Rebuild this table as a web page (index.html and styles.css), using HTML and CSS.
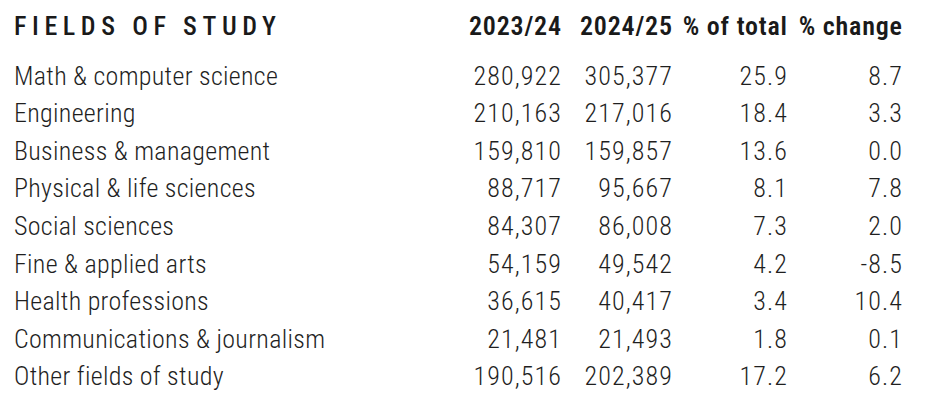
FILE: index.html
```html
<!DOCTYPE html>
<html lang="en">
<head>
<meta charset="utf-8">
<title>Fields of study</title>
<link rel="stylesheet" href="styles.css">
</head>
<body>
<div class="table">
  <div class="row head">
    <div class="title">FIELDS OF STUDY</div>
    <div class="num">2023/24</div>
    <div class="num">2024/25</div>
    <div class="num">% of total</div>
    <div class="num">% change</div>
  </div>
  <div class="row"><div class="label">Math &amp; computer science</div><div class="num">280,922</div><div class="num">305,377</div><div class="num">25.9</div><div class="num">8.7</div></div>
  <div class="row"><div class="label">Engineering</div><div class="num">210,163</div><div class="num">217,016</div><div class="num">18.4</div><div class="num">3.3</div></div>
  <div class="row"><div class="label">Business &amp; management</div><div class="num">159,810</div><div class="num">159,857</div><div class="num">13.6</div><div class="num">0.0</div></div>
  <div class="row"><div class="label">Physical &amp; life sciences</div><div class="num">88,717</div><div class="num">95,667</div><div class="num">8.1</div><div class="num">7.8</div></div>
  <div class="row"><div class="label">Social sciences</div><div class="num">84,307</div><div class="num">86,008</div><div class="num">7.3</div><div class="num">2.0</div></div>
  <div class="row"><div class="label">Fine &amp; applied arts</div><div class="num">54,159</div><div class="num">49,542</div><div class="num">4.2</div><div class="num">-8.5</div></div>
  <div class="row"><div class="label">Health professions</div><div class="num">36,615</div><div class="num">40,417</div><div class="num">3.4</div><div class="num">10.4</div></div>
  <div class="row"><div class="label">Communications &amp; journalism</div><div class="num">21,481</div><div class="num">21,493</div><div class="num">1.8</div><div class="num">0.1</div></div>
  <div class="row"><div class="label">Other fields of study</div><div class="num">190,516</div><div class="num">202,389</div><div class="num">17.2</div><div class="num">6.2</div></div>
</div>
</body>
</html>
```
FILE: styles.css
```css
html, body {
  margin: 0;
  padding: 0;
  background: #ffffff;
}
body {
  font-family: "Roboto Condensed", "Roboto", "Liberation Sans", sans-serif;
  font-size: 26px;
  font-weight: 300;
  color: #1f1f1f;
}
.table {
  padding: 8px 26px 0 14px;
}
.row {
  display: grid;
  grid-template-columns: 1fr 100px 111px 115px 115px;
  line-height: 37.6px;
  white-space: nowrap;
}
.label {
  letter-spacing: 0.3px;
}
.row.head {
  margin-bottom: 12px;
  font-weight: 600;
  color: #1a1a1a;
}
.title {
  font-weight: 500;
  letter-spacing: 5.6px;
}
.num {
  text-align: right;
}
.row:not(.head) .num {
  letter-spacing: 1.1px;
  margin-right: -1.1px;
}
.head .num {
  letter-spacing: 0.8px;
  margin-right: -0.8px;
}
```
